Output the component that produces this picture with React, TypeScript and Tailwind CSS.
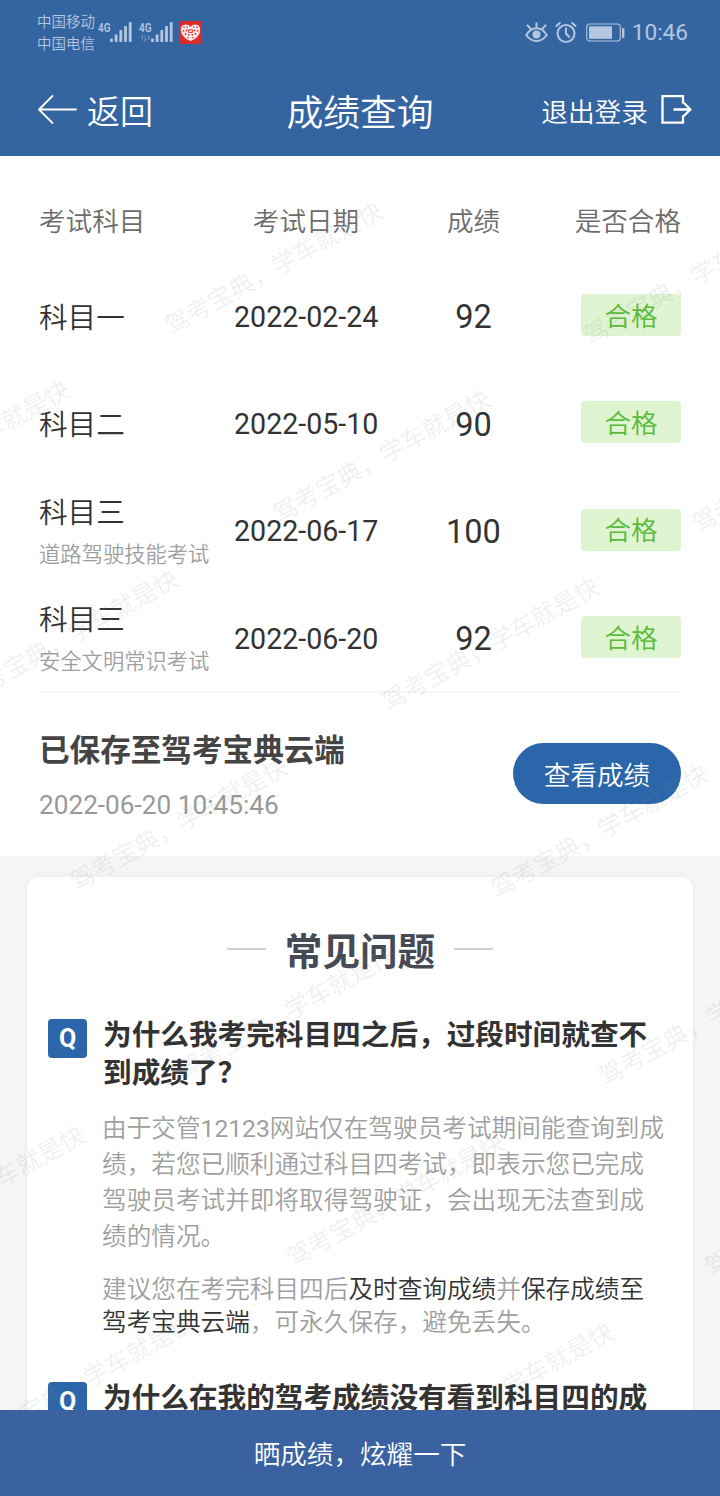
import React from "react";

type Result = { subject: string; detail?: string; date: string; score: number };

const results: Result[] = [
  { subject: "科目一", date: "2022-02-24", score: 92 },
  { subject: "科目二", date: "2022-05-10", score: 90 },
  { subject: "科目三", detail: "道路驾驶技能考试", date: "2022-06-17", score: 100 },
  { subject: "科目三", detail: "安全文明常识考试", date: "2022-06-20", score: 92 },
];

// Centre points of the repeated watermark text.
const marks: [number, number][] = [
  [274, 269], [382, 457], [491, 645], [600, 832], [708, 1020], [814, 1210],
  [693, 279], [801, 467],
  [-39, 448], [70, 637], [179, 825], [287, 1013], [396, 1201], [505, 1390],
  [-24, 1193], [86, 1381],
];

function Watermark() {
  return (
    <div className="pointer-events-none absolute inset-0 overflow-hidden">
      {marks.map(([x, y]) => (
        <span
          key={`${x}-${y}`}
          className="absolute -translate-x-1/2 -translate-y-1/2 -rotate-[29.2deg] whitespace-nowrap text-[24.500px] leading-none font-[350] text-[#7d8a96]/15"
          style={{ left: x, top: y }}
        >
          驾考宝典，学车就是快
        </span>
      ))}
    </div>
  );
}

function Signal({ data = false }: { data?: boolean }) {
  return (
    <svg width="35" height="28" viewBox="0 -4 35 28" fill="#b4c6e0">
      <text x="0" y="10.500" fontSize="13.500" fontWeight="600" textLength="12.500" lengthAdjust="spacingAndGlyphs">4G</text>
      {data && <path d="M1 17l2-3h1v6H3v-4zM5.500 14h1v4.500l1.500-1.500v2l-1.500 1.500h-1zM9 13.500l2.500 3L9 20z" opacity=".4" />}
      <rect x="12" y="17.500" width="2.800" height="3.500" rx=".8" />
      <rect x="16.700" y="13.500" width="2.800" height="7.500" rx=".8" />
      <rect x="21.400" y="9" width="2.800" height="12" rx=".8" />
      <rect x="26.100" y="5" width="2.800" height="16" rx=".8" />
      <rect x="30.800" y="1" width="2.800" height="20" rx=".8" />
    </svg>
  );
}

function HeartBadge() {
  return (
    <svg width="23" height="23" viewBox="0 0 23 23">
      <rect width="23" height="23" rx="1.500" fill="#dc2b2b" />
      <path d="M11.500 20L8 18.500 5 16 2.500 12.500 1.800 8 3 4.800 6.500 3.500 9.500 4l2 2 2-2 3-.5L20 4.800 21.200 8l-.7 4.500L18 16l-3 2.500z" fill="#fbe9e9" />
      <g fill="#dc2b2b">
        <circle cx="5" cy="6.200" r=".8" /><circle cx="8.300" cy="6" r=".8" /><circle cx="14.700" cy="6" r=".8" /><circle cx="18" cy="6.200" r=".8" />
        <circle cx="4.500" cy="9.800" r=".9" /><circle cx="7.700" cy="9.500" r=".9" /><circle cx="15.300" cy="9.500" r=".9" /><circle cx="18.500" cy="9.800" r=".9" />
        <circle cx="6.500" cy="13" r=".9" /><circle cx="9.700" cy="13.800" r=".9" /><circle cx="13.300" cy="13.800" r=".9" /><circle cx="16.500" cy="13" r=".9" />
        <circle cx="9" cy="16.800" r=".8" /><circle cx="14" cy="16.800" r=".8" />
      </g>
      <rect x="9.700" y="8.800" width="3.600" height="2.600" fill="none" stroke="#dc2b2b" strokeWidth=".9" />
    </svg>
  );
}

function StatusBar() {
  return (
    <div className="flex h-[66px] items-start pr-[32px] pl-[37px] text-[#b4c6e0]">
      <div className="mt-[12px] w-[61px] text-[14.5px] leading-[21.5px] whitespace-nowrap font-[350]">
        <div>中国移动</div>
        <div>中国电信</div>
      </div>
      <div className="mt-[17px] flex">
        <Signal />
        <div className="ml-[6px]"><Signal data /></div>
        <div className="mt-[4px] ml-[5px]"><HeartBadge /></div>
      </div>
      <div className="mt-[21px] ml-auto flex items-center">
        <svg width="23" height="22" viewBox="0 0 23 22" fill="none" stroke="#b4c6e0" strokeWidth="2" strokeLinecap="round">
          <path d="M1.200 13C4 8.500 7.500 6.300 11.500 6.300s7.500 2.200 10.300 6.700c-2.800 4-6.300 6-10.300 6s-7.500-2-10.300-6z" />
          <circle cx="11.500" cy="12.500" r="4" fill="#b4c6e0" stroke="none" />
          <path d="M11.500 5.500V1.300M5.800 7L2.500 3.300M17.200 7l3.300-3.700" />
        </svg>
        <svg className="ml-[7px]" width="22" height="22" viewBox="0 0 22 22" fill="none" stroke="#b4c6e0" strokeWidth="2" strokeLinecap="round">
          <circle cx="11" cy="11.500" r="8.500" />
          <path d="M11 6.500v5l3 3.200M1.500 4l3.300-3M20.500 4l-3.300-3" />
        </svg>
        <svg className="ml-[9px]" width="39" height="20" viewBox="0 0 39 20" fill="none">
          <rect x=".7" y="1" width="33.600" height="17" rx="3" stroke="#b4c6e0" strokeWidth="1.100" />
          <rect x="3" y="3.300" width="23" height="12.500" fill="#b4c6e0" />
          <rect x="36" y="5" width="2.400" height="10" rx="1" fill="#b4c6e0" />
        </svg>
        <span className="ml-[7px] text-[22.600px] leading-[24px]">10:46</span>
      </div>
    </div>
  );
}

function Header() {
  return (
    <header className="relative z-10 h-[156px] shrink-0 bg-[#3565a0] text-white">
      <StatusBar />
      <div className="grid h-[90px] grid-cols-[1fr_auto_1fr] items-center px-[37px] pb-[3px] font-[350]">
        <div className="flex items-center">
          <svg width="40" height="30" viewBox="0 0 40 30" fill="none" stroke="white" strokeWidth="1.800" strokeLinecap="round" strokeLinejoin="round">
            <path d="M39 14.500H2M15.500 1L2 14.500 15.500 28" />
          </svg>
          <span className="ml-[10px] pt-[7px] text-[33px] leading-[40px]">返回</span>
        </div>
        <h1 className="pt-[9px] text-[36.800px] leading-[44px] font-[350]">成绩查询</h1>
        <div className="-mr-[9px] flex items-center justify-end">
          <span className="pt-[6px] text-[26.700px] leading-[32px] whitespace-nowrap">退出登录</span>
          <svg className="ml-[13px]" width="31" height="30" viewBox="0 0 31 30" fill="none" stroke="white" strokeWidth="2.300">
            <path d="M22 8.500V1.200H1.500v26.500H22v-7.500M12.500 14.500H29M22.800 7.800l6.500 6.700-6.500 6.500" />
          </svg>
        </div>
      </div>
    </header>
  );
}

function ResultTable() {
  return (
    <section className="h-[535px] px-[39px] pt-[20px]">
      <div className="grid h-[87px] grid-cols-[195px_144px_191px_112px] items-center pt-[4px] text-[26.600px] font-[350] text-[#6c6c6c]">
        <div>考试科目</div>
        <div className="text-center">考试日期</div>
        <div className="text-center">成绩</div>
        <div className="text-right whitespace-nowrap">是否合格</div>
      </div>
      {results.map((r) => (
        <div key={r.date} className="grid h-[107.300px] grid-cols-[195px_144px_191px_112px] items-center text-[#333]">
          <div className="pt-[3px]">
            <div className="text-[28.600px] leading-[44px] font-[350]">{r.subject}</div>
            {r.detail && <div className="text-[21.300px] leading-[40px] font-[350] text-[#9f9f9f]">{r.detail}</div>}
          </div>
          <div className="pt-px text-center text-[28.600px] whitespace-nowrap">{r.date}</div>
          <div className="pt-[2px] text-center text-[32.500px]">{r.score}</div>
          <div className="flex justify-end">
            <span className="mb-[3px] flex h-[42px] w-[100px] items-center justify-center rounded-[4px] bg-[#dff4d1] pt-[4px] text-[26.600px] leading-none font-[350] text-[#5abb38]">合格</span>
          </div>
        </div>
      ))}
    </section>
  );
}

function SavedPanel() {
  return (
    <section className="mx-[39px] flex h-[165px] items-center justify-between border-t-2 border-[#f7f7f7]">
      <div className="pt-[2px]">
        <div className="text-[30.600px] leading-[44px] font-bold text-[#444]">已保存至驾考宝典云端</div>
        <div className="mt-[14px] text-[26.200px] leading-[36px] text-[#999]">2022-06-20 10:45:46</div>
      </div>
      <button className="mb-[3px] h-[61px] w-[168px] rounded-full bg-[#2c66aa] pt-[6px] text-[26.600px] leading-none font-[350] text-white">查看成绩</button>
    </section>
  );
}

function Question({ children }: { children: React.ReactNode }) {
  return (
    <div className="flex items-start gap-[16px]">
      <span className="mt-[3px] flex h-[39px] w-[39px] shrink-0 items-center justify-center rounded-[4px] bg-[#2c66aa] text-[25px] font-bold text-white">Q</span>
      <h3 className="text-[28.650px] leading-[38px] font-bold whitespace-nowrap text-[#333]">{children}</h3>
    </div>
  );
}

function Faq() {
  return (
    <section className="mx-[27px] mt-[21px] h-[700px] rounded-[12px] bg-white px-[21px] pt-[49px] shadow-[0_0_6px_rgba(0,0,0,0.06)]">
      <div className="flex h-[46px] items-center justify-center gap-[18px]">
        <span className="h-[2px] w-[39px] bg-[#cfd1d6]" />
        <h2 className="px-px pt-[5px] text-[37.600px] leading-[46px] font-bold text-[#454a55]">常见问题</h2>
        <span className="h-[2px] w-[39px] bg-[#cfd1d6]" />
      </div>
      <div className="mt-[44px]">
        <Question>为什么我考完科目四之后，过段时间就查不<br />到成绩了？</Question>
      </div>
      <div className="pl-[54px] text-[24.650px] font-[350] whitespace-nowrap text-[#9f9f9f]">
        <p className="mt-[19px] leading-[36px]">
          由于交管<span className="font-normal">12123</span>网站仅在驾驶员考试期间能查询到成<br />
          绩，若您已顺利通过科目四考试，即表示您已完成<br />
          驾驶员考试并即将取得驾驶证，会出现无法查到成<br />
          绩的情况。
        </p>
        <p className="mt-[18px] leading-[33px]">
          建议您在考完科目四后<span className="text-[#333]">及时查询成绩</span>并<span className="text-[#333]">保存成绩至</span><br />
          <span className="text-[#333]">驾考宝典云端</span>，可永久保存，避免丢失。
        </p>
      </div>
      <div className="mt-[40px]">
        <Question>为什么在我的驾考成绩没有看到科目四的成</Question>
      </div>
    </section>
  );
}

export default function App() {
  return (
    <div className="relative flex h-[1496px] w-[720px] flex-col overflow-hidden bg-[#f5f5f5] font-['Roboto','Noto_Sans_CJK_SC',sans-serif]" lang="zh-CN">
      <Header />
      <main className="min-h-0 flex-1 overflow-hidden">
        <div className="h-[700px] bg-white">
          <ResultTable />
          <SavedPanel />
        </div>
        <Faq />
      </main>
      <Watermark />
      <footer className="relative z-10 flex h-[86px] shrink-0 items-center justify-center bg-[#3b62a0] pt-[4px] text-[26.600px] font-[350] text-white">
        晒成绩，炫耀一下
      </footer>
    </div>
  );
}
